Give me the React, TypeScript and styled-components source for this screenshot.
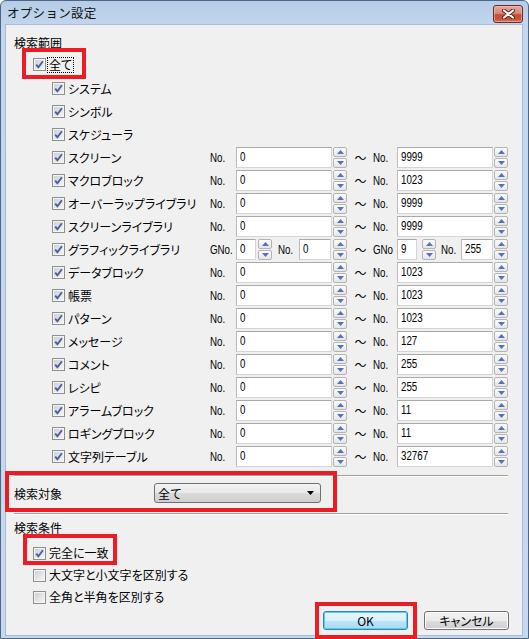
import React from "react";
import styled, { createGlobalStyle } from "styled-components";

const UI = `"Noto Sans CJK JP", "Noto Sans", sans-serif`;
const NUM = `"Liberation Sans", Arial, sans-serif`;

const GlobalStyle = createGlobalStyle`
  html, body { margin: 0; padding: 0; background: #ffffff; }
  body { width: 529px; height: 639px; overflow: hidden; font-family: ${UI}; font-size: 12px; line-height: 15px; }
  *, *::before, *::after { box-sizing: border-box; }
`;

const Window = styled.div`
  position: relative;
  width: 529px;
  height: 639px;
  display: flex;
  flex-direction: column;
  border: 1px solid #4f6580;
  border-radius: 6px 6px 0 0;
  background: linear-gradient(#b5cde8, #c3d7ed 26px, #c6d9ee);
  padding: 0 6px 3px 5px;
`;

const TitleBar = styled.div`
  height: 24px;
  display: flex;
  align-items: flex-start;
  justify-content: space-between;
  padding-left: 1px;
`;

const TitleText = styled.span`
  font-family: ${UI};
  font-size: 12.5px;
  line-height: 24px;
  color: #111;
  letter-spacing: 0.3px;
`;

const CloseButton = styled.div`
  margin-top: 4px;
  margin-right: -1px;
  width: 30px;
  height: 18px;
  border: 1px solid #6a2a20;
  border-radius: 3px;
  background: linear-gradient(#e4a89b 0%, #d58a78 45%, #c34f39 55%, #c9553d 85%, #d8826a 100%);
  box-shadow: inset 0 0 0 1px rgba(255, 210, 200, 0.45);
  display: flex;
  align-items: center;
  justify-content: center;
`;

const Body = styled.div`
  flex: 1;
  background: #f0f0f0;
  box-shadow: 0 0 0 1px #a5bcd8;
  display: flex;
  flex-direction: column;
`;

const GroupLabel = styled.div<{ $mt: number }>`
  margin: ${(p) => p.$mt}px 0 0 8px;
  height: 15px;
  font-family: ${UI};
  font-size: 12px;
  line-height: 15px;
  color: #000;
`;

const Highlight = styled.div<{ $l: number; $t: number; $w: number; $h: number }>`
  position: relative;
  display: flex;
  flex-direction: column;
  &::after {
    content: "";
    position: absolute;
    left: ${(p) => p.$l}px;
    top: ${(p) => p.$t}px;
    width: ${(p) => p.$w}px;
    height: ${(p) => p.$h}px;
    border: 4px solid #ec1c24;
    pointer-events: none;
  }
`;

const InlineHighlight = styled(Highlight)`
  display: inline-flex;
  flex-direction: row;
  align-self: stretch;
`;

const CheckRow = styled.div<{ $pl: number; $h: number; $mt?: number }>`
  display: flex;
  align-items: center;
  height: ${(p) => p.$h}px;
  padding-left: ${(p) => p.$pl}px;
  margin-top: ${(p) => p.$mt ?? 0}px;
`;

const CheckItem = styled.label`
  display: inline-flex;
  align-items: center;
  gap: 2px;
  height: 100%;
`;

const Box = styled.span`
  width: 13px;
  height: 13px;
  flex: none;
  border: 1px solid #8e8f8f;
  background: linear-gradient(135deg, #c9ccd1 0%, #e4e5e7 55%, #f7f7f7 100%);
  box-shadow: inset 0 0 0 1px #f4f4f4;
  display: flex;
  align-items: center;
  justify-content: center;
`;

const CheckText = styled.span<{ $focus?: boolean }>`
  font-family: ${UI};
  font-size: 12px;
  line-height: 14px;
  color: #000;
  white-space: nowrap;
  font-feature-settings: "palt";
  padding: 0 1px;
  outline: ${(p) => (p.$focus ? "1px dotted #000" : "none")};
`;

const List = styled.div`
  margin-top: 1px;
  padding-left: 46px;
  display: flex;
  flex-direction: column;
`;

const ItemRow = styled.div`
  display: grid;
  grid-template-columns: 158px 138px 25px 135px;
  align-items: center;
  height: 23px;
`;

const Half = styled.div`
  display: flex;
  align-items: center;
`;

const Narrow = styled.span`
  display: inline-block;
  font-family: ${NUM};
  font-size: 12.5px;
  line-height: 14px;
  color: #000;
  white-space: nowrap;
  transform: scaleX(0.78);
  transform-origin: left center;
`;

const NoLabel = styled.span<{ $w: number; $ml?: number }>`
  width: ${(p) => p.$w}px;
  margin-left: ${(p) => p.$ml ?? 0}px;
  flex: none;
  display: flex;
  align-items: center;
`;

const TextBox = styled.div<{ $w: number }>`
  width: ${(p) => p.$w}px;
  height: 21px;
  flex: none;
  padding: 0 0 1px 3px;
  border: 1px solid #d5d5d5;
  border-top-color: #a9a9a9;
  border-left-color: #bcbcbc;
  background: #fff;
  display: flex;
  align-items: center;
  overflow: hidden;
`;

const Spin = styled.div<{ $ml: number }>`
  margin-left: ${(p) => p.$ml}px;
  width: 14px;
  flex: none;
  display: flex;
  flex-direction: column;
  gap: 1px;
`;

const SpinButton = styled.div`
  height: 10px;
  border: 1px solid #b4b4b4;
  border-radius: 2px;
  background: linear-gradient(#fbfbfb, #e3e6ea);
  display: flex;
  align-items: center;
  justify-content: center;
`;

const Tilde = styled.span`
  text-align: center;
  font-family: ${UI};
  font-size: 12px;
  color: #000;
`;

const Separator = styled.div`
  margin: 0 14px 0 8px;
  height: 2px;
  border-top: 1px solid #a0a0a0;
  border-bottom: 1px solid #ffffff;
`;

const TargetRow = styled.div`
  display: flex;
  align-items: center;
  padding: 6px 0 10px 8px;
`;

const TargetLabel = styled.span`
  width: 140px;
  font-family: ${UI};
  font-size: 12px;
  color: #000;
`;

const Combo = styled.div`
  width: 167px;
  height: 20px;
  border: 1px solid #707070;
  border-radius: 3px;
  background: linear-gradient(#f3f3f3, #e8e8e8 50%, #dadada 51%, #d0d0d0);
  display: flex;
  align-items: center;
  justify-content: space-between;
  padding: 0 6px 0 3px;
  font-family: ${UI};
  font-size: 12px;
  color: #000;
`;

const ButtonRow = styled.div`
  margin-top: 3px;
  padding-right: 13px;
  display: flex;
  align-items: flex-start;
  justify-content: flex-end;
  gap: 16px;
`;

const Button = styled.button<{ $default?: boolean }>`
  width: 85px;
  height: 19px;
  margin: 0;
  padding: 0;
  display: block;
  border: 1px solid ${(p) => (p.$default ? "#3c7fb1" : "#707070")};
  border-radius: 3px;
  background: ${(p) =>
    p.$default
      ? "linear-gradient(#eaf6fd, #d9f0fc 50%, #bee6fd 51%, #a7d9f5)"
      : "linear-gradient(#f2f2f2, #ebebeb 50%, #dddddd 51%, #cfcfcf)"};
  box-shadow: inset 0 0 0 1px ${(p) => (p.$default ? "#48d4f7" : "#fcfcfc")};
  font-family: ${UI};
  font-size: 12px;
  line-height: 17px;
  color: #000;
  font-feature-settings: "palt";
`;

function CheckMark() {
  return (
    <svg width="9" height="9" viewBox="0 0 9 9">
      <path d="M1.2 4.6 L3.4 7.2 L7.9 1.2" fill="none" stroke="#4a5e9a" strokeWidth="1.9" />
    </svg>
  );
}

function Check({ checked, children, focus }: { checked: boolean; children: React.ReactNode; focus?: boolean }) {
  return (
    <CheckItem>
      <Box>{checked && <CheckMark />}</Box>
      <CheckText $focus={focus}>{children}</CheckText>
    </CheckItem>
  );
}

function Spinner({ ml }: { ml: number }) {
  return (
    <Spin $ml={ml}>
      <SpinButton>
        <svg width="7" height="4" viewBox="0 0 7 4">
          <polygon points="0,4 7,4 3.5,0" fill="#5772b4" />
        </svg>
      </SpinButton>
      <SpinButton>
        <svg width="7" height="4" viewBox="0 0 7 4">
          <polygon points="0,0 7,0 3.5,4" fill="#5772b4" />
        </svg>
      </SpinButton>
    </Spin>
  );
}

function Field({ w, value }: { w: number; value: string }) {
  return (
    <TextBox $w={w}>
      <Narrow>{value}</Narrow>
    </TextBox>
  );
}

function No({ w, ml, text }: { w: number; ml?: number; text: string }) {
  return (
    <NoLabel $w={w} $ml={ml}>
      <Narrow>{text}</Narrow>
    </NoLabel>
  );
}

type Row = { label: string; from?: string; to?: string; graphic?: boolean };

const rows: Row[] = [
  { label: "システム" },
  { label: "シンボル" },
  { label: "スケジューラ" },
  { label: "スクリーン", from: "0", to: "9999" },
  { label: "マクロブロック", from: "0", to: "1023" },
  { label: "オーバーラップライブラリ", from: "0", to: "9999" },
  { label: "スクリーンライブラリ", from: "0", to: "9999" },
  { label: "グラフィックライブラリ", graphic: true },
  { label: "データブロック", from: "0", to: "1023" },
  { label: "帳票", from: "0", to: "1023" },
  { label: "パターン", from: "0", to: "1023" },
  { label: "メッセージ", from: "0", to: "127" },
  { label: "コメント", from: "0", to: "255" },
  { label: "レシピ", from: "0", to: "255" },
  { label: "アラームブロック", from: "0", to: "11" },
  { label: "ロギングブロック", from: "0", to: "11" },
  { label: "文字列テーブル", from: "0", to: "32767" },
];

function RangeRow({ row }: { row: Row }) {
  return (
    <ItemRow>
      <Check checked>{row.label}</Check>
      {row.graphic ? (
        <>
          <Half>
            <No w={26} text="GNo." />
            <Field w={20} value="0" />
            <Spinner ml={2} />
            <No w={21} ml={6} text="No." />
            <Field w={32} value="0" />
            <Spinner ml={2} />
          </Half>
          <Tilde>～</Tilde>
          <Half>
            <No w={24} text="GNo" />
            <Field w={20} value="9" />
            <Spinner ml={5} />
            <No w={20} ml={5} text="No." />
            <Field w={32} value="255" />
            <Spinner ml={1} />
          </Half>
        </>
      ) : row.from !== undefined ? (
        <>
          <Half>
            <No w={26} text="No." />
            <Field w={96} value={row.from} />
            <Spinner ml={1} />
          </Half>
          <Tilde>～</Tilde>
          <Half>
            <No w={24} text="No." />
            <Field w={96} value={row.to ?? ""} />
            <Spinner ml={1} />
          </Half>
        </>
      ) : null}
    </ItemRow>
  );
}

export default function App() {
  return (
    <>
      <GlobalStyle />
      <Window>
        <TitleBar>
          <TitleText>オプション設定</TitleText>
          <CloseButton>
            <svg width="13" height="10" viewBox="0 0 13 10">
              <path d="M2 1.5 L11 8.5 M11 1.5 L2 8.5" stroke="#5a1c14" strokeWidth="4" strokeLinecap="round" />
              <path d="M2 1.5 L11 8.5 M11 1.5 L2 8.5" stroke="#ffffff" strokeWidth="2.2" strokeLinecap="round" />
            </svg>
          </CloseButton>
        </TitleBar>
        <Body>
          <GroupLabel $mt={10}>検索範囲</GroupLabel>
          <CheckRow $pl={27} $h={23} $mt={3}>
            <InlineHighlight $l={-11} $t={-5} $w={64} $h={31}>
              <Check checked focus>全て</Check>
            </InlineHighlight>
          </CheckRow>
          <List>
            {rows.map((r) => (
              <RangeRow key={r.label} row={r} />
            ))}
          </List>
          <Highlight $l={-1} $t={-4} $w={332} $h={41} style={{ marginTop: 7 }}>
            <Separator />
            <TargetRow>
              <TargetLabel>検索対象</TargetLabel>
              <Combo>
                <span>全て</span>
                <svg width="7" height="4" viewBox="0 0 7 4">
                  <polygon points="0,0 7,0 3.5,4" fill="#000" />
                </svg>
              </Combo>
            </TargetRow>
          </Highlight>
          <Separator />
          <GroupLabel $mt={5}>検索条件</GroupLabel>
          <CheckRow $pl={27} $h={22} $mt={7}>
            <InlineHighlight $l={-10} $t={-8} $w={94} $h={31}>
              <Check checked>完全に一致</Check>
            </InlineHighlight>
          </CheckRow>
          <CheckRow $pl={27} $h={22}>
            <Check checked={false}>大文字と小文字を区別する</Check>
          </CheckRow>
          <CheckRow $pl={27} $h={22}>
            <Check checked={false}>全角と半角を区別する</Check>
          </CheckRow>
          <ButtonRow>
            <Highlight $l={-8} $t={-9} $w={102} $h={37}>
              <Button $default>OK</Button>
            </Highlight>
            <Button>キャンセル</Button>
          </ButtonRow>
        </Body>
      </Window>
    </>
  );
}
